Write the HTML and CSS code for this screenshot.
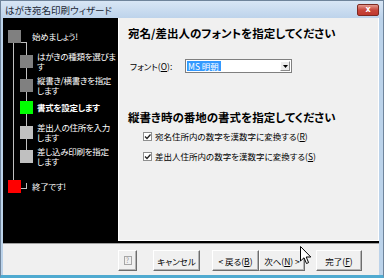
FILE: index.html
```html
<!DOCTYPE html>
<html lang="ja">
<head>
    <meta charset="UTF-8">
    <title>はがき宛名印刷ウィザード</title>
    <link rel="stylesheet" href="styles.css">
</head>
<body>
<div class="window">
    <div class="titlebar">
        <span class="title">はがき宛名印刷ウィザード</span>
        <span class="close">x</span>
    </div>

    <div class="frame">
        <div class="main">
            <div class="steps">
                <svg class="tree" width="115" height="225">
                    <path d="M10.5 25 V162 M18 24.5 H23.5 V138.5 M18 170.5 H23.5 V165" stroke="#c0c0c0" fill="none"/>
                </svg>
                <div class="step top h25"><span class="box done"></span><span class="label one">始めましょう!</span></div>
                <div class="step sub h24"><span class="box done"></span><span class="label">はがきの種類を選びま<br>す</span></div>
                <div class="step sub h22"><span class="box done"></span><span class="label">縦書き/横書きを指定<br>します</span></div>
                <div class="step sub h25"><span class="box now"></span><span class="label one bold">書式を設定します</span></div>
                <div class="step sub h24"><span class="box todo"></span><span class="label">差出人の住所を入力<br>します</span></div>
                <div class="step sub h30"><span class="box todo"></span><span class="label">差し込み印刷を指定<br>します</span></div>
                <div class="step top"><span class="box end"></span><span class="label one">終了です!</span></div>
            </div>

            <div class="page">
                <h2>宛名/差出人のフォントを指定してください</h2>
                <div class="font-row">
                    <label class="font-label">フォント(<u>O</u>):</label>
                    <div class="combo">
                        <span class="combo-value">MS 明朝</span>
                        <span class="combo-arrow"><svg width="5" height="3"><path d="M0 0 H5 L2.5 3 Z" fill="#000"/></svg></span>
                    </div>
                </div>

                <h2 class="second">縦書き時の番地の書式を指定してください</h2>
                <div class="check-row">
                    <span class="check"><svg width="7" height="7"><path d="M1 3.5 L3 5.5 L6.5 1.5" stroke="#222" stroke-width="1.3" fill="none"/></svg></span>
                    <span>宛名住所内の数字を漢数字に変換する(<u>R</u>)</span>
                </div>
                <div class="check-row">
                    <span class="check"><svg width="7" height="7"><path d="M1 3.5 L3 5.5 L6.5 1.5" stroke="#222" stroke-width="1.3" fill="none"/></svg></span>
                    <span>差出人住所内の数字を漢数字に変換する(<u>S</u>)</span>
                </div>
            </div>
        </div>

        <div class="footer">
            <button class="btn help"><span class="help-icon">?</span></button>
            <button class="btn cancel">キャンセル</button>
            <button class="btn back">&lt; 戻る(<u>B</u>)</button>
            <button class="btn next">次へ(<u>N</u>) &gt;</button>
            <button class="btn finish">完了(<u>F</u>)</button>
        </div>
    </div>

    <svg class="cursor" width="12" height="19">
        <path d="M0.5 0.5 V15 L4 11.8 L6.5 17.5 L8.6 16.6 L6.2 11 H10.8 Z" fill="#fff" stroke="#000"/>
    </svg>
</div>
</body>
</html>
```

FILE: styles.css
```css
* {
    margin: 0;
    padding: 0;
    box-sizing: border-box;
}

body {
    font-family: "Noto Sans CJK JP", sans-serif;
    font-size: 8.5px;
    font-feature-settings: "palt";
    color: #000;
    background: #fff;
}

.window {
    position: relative;
    width: 384px;
    height: 278px;
    display: flex;
    flex-direction: column;
    background: #bcd3ea;
    border: 1px solid #6f849b;
    border-bottom: 3px solid #4faad0;
}

.titlebar {
    height: 17px;
    display: flex;
    align-items: center;
    justify-content: space-between;
    padding: 0 4px;
    background: linear-gradient(#d8e6f5, #bdd3eb);
}

.title {
    font-size: 9.5px;
    color: #1b2633;
}

.close {
    width: 22px;
    height: 12px;
    display: flex;
    align-items: center;
    justify-content: center;
    background: linear-gradient(#e49a8f, #c8473c 50%, #c0392f);
    border: 1px solid #7d2a22;
    border-radius: 2px;
    color: #fff;
    font-family: "DejaVu Sans", sans-serif;
    font-size: 8px;
    font-weight: bold;
    line-height: 1;
}

.frame {
    flex: 1;
    display: flex;
    flex-direction: column;
    padding: 0 4px 0 2px;
}

.main {
    height: 225px;
    display: flex;
    background: #000;
}

/* left step list */
.steps {
    position: relative;
    width: 115px;
    padding-top: 8px;
    color: #fff;
}

.tree {
    position: absolute;
    left: 0;
    top: 0;
    shape-rendering: crispEdges;
}

.step {
    position: relative;
    display: flex;
    align-items: flex-start;
}

.step.top { padding-left: 5px; }
.step.sub { padding-left: 17px; }
.h22 { height: 22px; }
.h24 { height: 24px; }
.h25 { height: 25px; }
.h30 { height: 30px; }

.box {
    width: 13px;
    height: 13px;
    margin-top: 4px;
    flex-shrink: 0;
}

.box.done { background: #808080; }
.box.now { background: #00ff00; }
.box.todo { background: #c0c0c0; }
.box.end { background: #ff0000; }

.label {
    line-height: 10px;
    letter-spacing: -0.3px;
    white-space: nowrap;
}

.step.top .label { margin-left: 11px; }
.step.sub .label { margin-left: 4px; }

.label.one {
    margin-top: 4px;
    line-height: 13px;
}

.bold { font-weight: bold; }

/* right page */
.page {
    flex: 1;
    background: #f0f0f0;
    border-left: 1px solid #fff;
    border-right: 1px solid #fff;
    border-bottom: 1px solid #fff;
    margin-bottom: 2px;
    padding: 8px 0 0 9px;
}

h2 {
    font-size: 11.5px;
    font-weight: bold;
    line-height: 14px;
}

h2.second {
    margin-top: 37px;
}

.font-row {
    display: flex;
    align-items: center;
    margin-top: 19px;
    padding-left: 2px;
}

.font-label {
    width: 55px;
}

.combo {
    width: 107px;
    height: 14px;
    display: flex;
    align-items: center;
    justify-content: space-between;
    background: #fff;
    border: 1px solid #7f7f7f;
    padding: 0 1px;
}

.combo-value {
    background: #3399ff;
    color: #fff;
    line-height: 10px;
    padding: 0 2px 0 1px;
}

.combo-arrow {
    width: 10px;
    height: 10px;
    display: flex;
    align-items: center;
    justify-content: center;
    background: #ececec;
    border: 1px solid;
    border-color: #fff #8a8a8a #8a8a8a #fff;
}

.check-row {
    display: flex;
    align-items: center;
    height: 12px;
    padding-left: 15px;
    margin-top: 6px;
}

.check-row + .check-row {
    margin-top: 8px;
}

.check {
    width: 9px;
    height: 9px;
    margin-right: 3px;
    display: flex;
    align-items: center;
    justify-content: center;
    background: #fff;
    border: 1px solid #8e8f8f;
}

/* bottom buttons */
.footer {
    flex: 1;
    display: flex;
    align-items: flex-start;
    background: #f0f0f0;
    border-top: 1px solid #a0a0a0;
    padding-top: 6px;
}

.btn {
    height: 21px;
    width: 47px;
    display: flex;
    align-items: center;
    justify-content: center;
    font: inherit;
    color: #000;
    background: #f0f0f0;
    border: 1px solid;
    border-color: #fff #6d6d6d #6d6d6d #fff;
    box-shadow: inset -1px -1px #b4b4b4;
}

.help { width: 19px; margin-left: 115px; }
.cancel { margin-left: 16px; }
.back { margin-left: 12px; }
.next { width: 46px; }
.finish { width: 46px; margin-left: 11px; }

.help-icon {
    width: 8px;
    height: 9px;
    display: flex;
    align-items: center;
    justify-content: center;
    border: 1px solid #a6a6a6;
    color: #9a9a9a;
    font-size: 7px;
    line-height: 1;
}

.cursor {
    position: absolute;
    left: 299px;
    top: 245px;
}
```
